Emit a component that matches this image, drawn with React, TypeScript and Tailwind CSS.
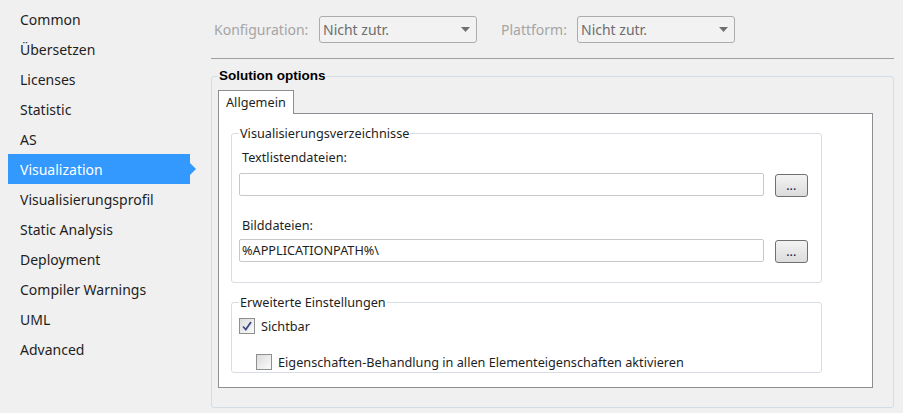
import React from 'react';

const navItems = [
  'Common',
  'Übersetzen',
  'Licenses',
  'Statistic',
  'AS',
  'Visualization',
  'Visualisierungsprofil',
  'Static Analysis',
  'Deployment',
  'Compiler Warnings',
  'UML',
  'Advanced',
];

const ui = "font-['Noto_Sans',sans-serif]";

const Select: React.FC<{ label: string; labelWidth: string }> = ({ label, labelWidth }) => (
  <div className="flex items-center">
    <span className={`text-[14px] text-[#a5a5a5] ${labelWidth}`}>{label}</span>
    <div className="flex h-[27px] w-[158px] items-center justify-between rounded-[3px] border border-[#acacac] bg-[#f2f2f2] pl-[3px] pr-[6px]">
      <span className="text-[14px] text-[#6d6d6d]">Nicht zutr.</span>
      <svg width="9" height="5" viewBox="0 0 9 5">
        <path d="M0 0 H9 L4.5 5 Z" fill="#707070" />
      </svg>
    </div>
  </div>
);

const PathRow: React.FC<{ value?: string }> = ({ value }) => (
  <div className="flex items-start">
    <div className="flex h-[23px] w-[525px] items-center rounded-[2px] border border-[#c8c8c8] bg-white pl-[2px] text-[12.7px] text-[#1e1e1e]">
      {value}
    </div>
    <button className="ml-[11px] mt-px flex h-[23px] w-[33px] items-end justify-center rounded-[3px] border border-[#707070] bg-gradient-to-b from-[#f3f3f3] to-[#dcdcdc] pb-[5px] text-[10px] font-bold leading-none tracking-[0.5px] text-[#1b1b4b]">
      ...
    </button>
  </div>
);

const Checkbox: React.FC<{ checked?: boolean }> = ({ checked }) => (
  <div className="flex h-[16px] w-[16px] shrink-0 items-center justify-center border border-[#8e8f8f] bg-gradient-to-br from-[#dcdcdc] to-[#fbfbfb]">
    {checked && (
      <svg width="12" height="12" viewBox="0 0 12 12">
        <path d="M2 6.5 L4.8 9.5 L10 2" fill="none" stroke="#3c4a84" strokeWidth="1.8" />
      </svg>
    )}
  </div>
);

export default function App() {
  return (
    <div className={`flex h-[413px] w-[903px] overflow-hidden bg-[#f0f0f0] ${ui}`}>
      <nav className="w-[211px] shrink-0 pt-[4px]">
        {navItems.map((item) => {
          const active = item === 'Visualization';
          return (
            <div
              key={item}
              className={`relative ml-2 flex h-[30px] w-[182px] items-center pl-3 text-[14px] ${
                active ? 'bg-[#3399ff] text-white' : 'text-[#1e1e1e]'
              }`}
            >
              {item}
              {active && (
                <span className="absolute left-full top-1/2 -translate-y-1/2 border-y-[6px] border-l-[6px] border-y-transparent border-l-[#3399ff]" />
              )}
            </div>
          );
        })}
      </nav>

      <div className="w-[683px] shrink-0">
        <div className="flex h-[43px] items-end gap-[24px] pl-[3px]">
          <Select label="Konfiguration:" labelWidth="w-[105px]" />
          <Select label="Plattform:" labelWidth="w-[76px]" />
        </div>
        <div className="mt-[15px] h-px bg-[#a0a0a0]" />

        <fieldset className="mt-[9px] rounded-[3px] border border-[#d5dde4] pb-[19px] pl-[6px] pr-[20px] pt-[6px]">
          <legend className="px-px font-['Liberation_Sans',sans-serif] text-[13.5px] font-bold leading-[16px] text-black">
            Solution options
          </legend>

          <div className="flex">
            <div className="relative z-10 -mb-px flex h-[24px] items-center border border-b-0 border-[#8c8e94] bg-white px-[7px] text-[12.7px] text-[#1e1e1e]">
              Allgemein
            </div>
          </div>
          <div className="h-[275px] border border-[#8c8e94] bg-white pl-[12px] pt-[11px]">
            <fieldset className="w-[591px] rounded-[3px] border border-[#d8dde3] pb-[19px] pl-[7px] pt-[8px]">
              <legend className="px-px text-[12.7px] leading-[16px] text-[#1e1e1e]">Visualisierungsverzeichnisse</legend>
              <div className="pl-[3px] text-[12.7px] leading-[16px] text-[#1e1e1e]">Textlistendateien:</div>
              <div className="mt-[8px]">
                <PathRow />
              </div>
              <div className="mt-[20px] pl-[3px] text-[12.7px] leading-[16px] text-[#1e1e1e]">Bilddateien:</div>
              <div className="mt-[6px]">
                <PathRow value="%APPLICATIONPATH%\" />
              </div>
            </fieldset>

            <fieldset className="mt-[11px] w-[591px] rounded-[3px] border border-[#d8dde3] pb-[2px] pl-[7px] pt-[8px]">
              <legend className="px-px text-[12.7px] leading-[16px] text-[#1e1e1e]">Erweiterte Einstellungen</legend>
              <div className="flex h-[16px] items-center gap-[6px] text-[12.7px] leading-[16px] text-[#1e1e1e]">
                <Checkbox checked />
                <span>Sichtbar</span>
              </div>
              <div className="ml-[17px] mt-[20px] flex h-[16px] items-center gap-[6px] text-[12.7px] leading-[16px] text-[#1e1e1e]">
                <Checkbox />
                <span>Eigenschaften-Behandlung in allen Elementeigenschaften aktivieren</span>
              </div>
            </fieldset>
          </div>
        </fieldset>
      </div>
    </div>
  );
}
